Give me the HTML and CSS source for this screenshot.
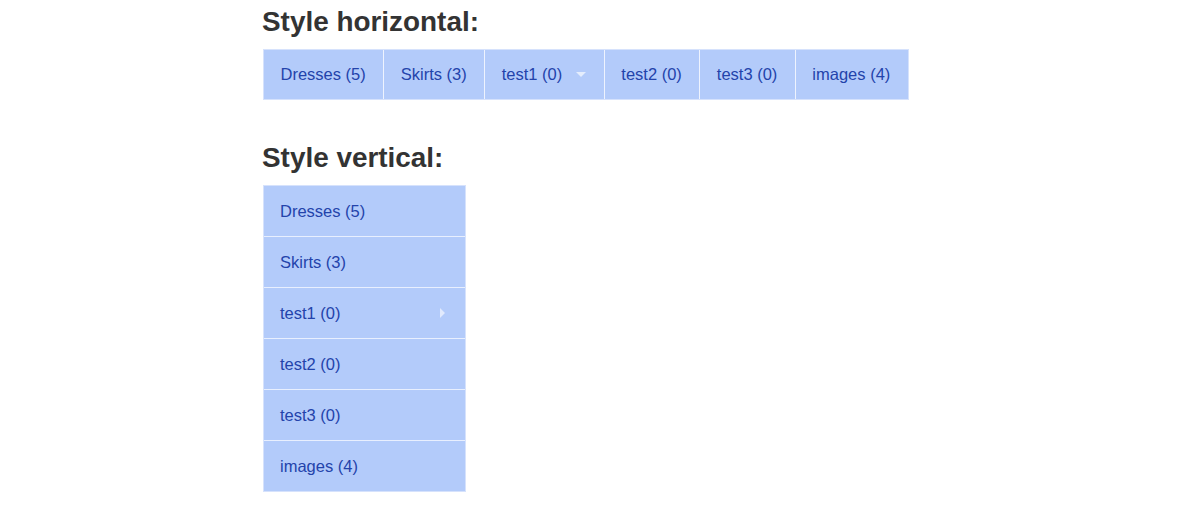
FILE: index.html
```html
<!DOCTYPE html>
<html lang="en">
<head>
<meta charset="utf-8">
<title>Menu styles</title>
<link rel="stylesheet" href="styles.css">
</head>
<body>
<div class="page">
  <h2 class="title">Style horizontal:</h2>
  <ul class="menu menu-h">
    <li class="item"><a href="#">Dresses (5)</a></li>
    <li class="item"><a href="#">Skirts (3)</a></li>
    <li class="item has-sub"><a href="#">test1 (0)<span class="caret-down"></span></a></li>
    <li class="item"><a href="#">test2 (0)</a></li>
    <li class="item"><a href="#">test3 (0)</a></li>
    <li class="item"><a href="#">images (4)</a></li>
  </ul>

  <h2 class="title title-v">Style vertical:</h2>
  <ul class="menu menu-v">
    <li class="item"><a href="#">Dresses (5)</a></li>
    <li class="item"><a href="#">Skirts (3)</a></li>
    <li class="item has-sub"><a href="#">test1 (0)<span class="caret-right"></span></a></li>
    <li class="item"><a href="#">test2 (0)</a></li>
    <li class="item"><a href="#">test3 (0)</a></li>
    <li class="item"><a href="#">images (4)</a></li>
  </ul>
</div>
</body>
</html>
```

FILE: styles.css
```css
html, body {
  margin: 0;
  padding: 0;
  background: #ffffff;
}

body {
  font-family: "Liberation Sans", Arial, Helvetica, sans-serif;
}

.page {
  padding: 6px 0 0 262px;
}

.title {
  margin: 0 0 11px 0;
  font-size: 27.9px;
  line-height: 32px;
  font-weight: bold;
  color: #333333;
}

.title-v {
  margin-top: 42px;
}

.menu {
  list-style: none;
  margin: 0 0 0 1px;
  padding: 0;
  background: #b3cbfa;
  border: 1px solid #d6e2fc;
}

.menu-h {
  display: inline-flex;
}

.menu-v {
  display: flex;
  flex-direction: column;
  width: 201px;
}

.item a {
  display: flex;
  align-items: center;
  height: 50px;
  padding: 0 17px 0 16px;
  font-size: 16.5px;
  color: #2343ab;
  text-decoration: none;
  white-space: nowrap;
}

.menu-h .item a {
  height: 49px;
  padding: 0 17.5px 0 16.5px;
}

.menu-h .item + .item {
  border-left: 1px solid #eef3fe;
}

.menu-v .item + .item {
  border-top: 1px solid #e8effe;
}

.caret-down {
  display: inline-block;
  width: 0;
  height: 0;
  margin-left: 14px;
  border-left: 5px solid transparent;
  border-right: 5px solid transparent;
  border-top: 5px solid rgba(255, 255, 255, 0.65);
}

.menu-v .has-sub a {
  justify-content: space-between;
  padding-right: 20px;
}

.caret-right {
  display: inline-block;
  width: 0;
  height: 0;
  border-top: 5px solid transparent;
  border-bottom: 5px solid transparent;
  border-left: 5px solid rgba(255, 255, 255, 0.6);
}
```
